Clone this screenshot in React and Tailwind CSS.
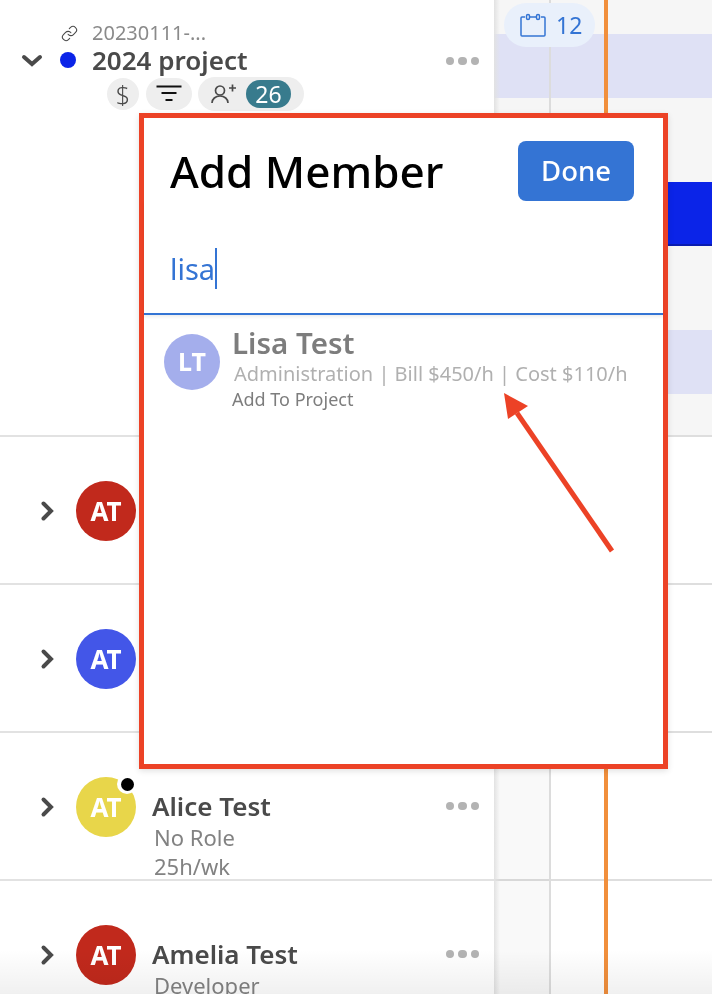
import React from "react";
import { Link } from "lucide-react";

const font = "font-['Noto_Sans','Open_Sans',sans-serif]";

const members = [
  { initials: "AT", color: "bg-[#c1291c]" },
  { initials: "AT", color: "bg-[#4356e8]" },
  { initials: "AT", color: "bg-[#e8d64a]", name: "Alice Test", role: "No Role", hours: "25h/wk", dot: true },
  { initials: "AT", color: "bg-[#c1291c]", name: "Amelia Test", role: "Developer" },
];

function Dots() {
  return (
    <div className="flex gap-[4px]">
      <span className="w-[8.5px] h-[8.5px] rounded-full bg-[#b3b3b3]"></span>
      <span className="w-[8.5px] h-[8.5px] rounded-full bg-[#b3b3b3]"></span>
      <span className="w-[8.5px] h-[8.5px] rounded-full bg-[#b3b3b3]"></span>
    </div>
  );
}

function MemberRow({ member }) {
  return (
    <div className="h-[148px] border-t-2 border-[#e2e2e2] flex items-start pt-[44px] pl-[36px] pr-[15px]">
      <svg width="22" height="22" viewBox="0 0 22 22" className="mt-[19px] shrink-0">
        <path d="M7.5 3.5L15 11L7.5 18.5" stroke="#4a4a4a" strokeWidth="4" fill="none" strokeLinecap="round" strokeLinejoin="miter" />
      </svg>
      <div className={`relative w-[60px] h-[60px] rounded-full ml-[18px] shrink-0 flex items-center justify-center text-white font-bold text-[26px] ${member.color}`}>
        {member.initials}
        {member.dot && (
          <span className="absolute top-[-3px] right-[-1px] w-[20px] h-[20px] rounded-full bg-white flex items-center justify-center">
            <span className="w-[13px] h-[13px] rounded-full bg-black"></span>
          </span>
        )}
      </div>
      <div className="ml-[16px] flex-1 min-w-0">
        {member.name && (
          <>
            <div className="flex items-center justify-between h-[30px] mt-[14px]">
              <span className="text-[26px] font-semibold text-[#4a4a4a] leading-none">{member.name}</span>
              <Dots />
            </div>
            <div className="text-[22px] text-[#828282] leading-[29px] ml-[2px] mt-[2px]">{member.role}</div>
            {member.hours && <div className="text-[22px] text-[#828282] leading-[29px] ml-[2px]">{member.hours}</div>}
          </>
        )}
      </div>
    </div>
  );
}

function GridRow() {
  return <div className="h-[148px] border-t-2 border-[#dedede]"></div>;
}

function Timeline() {
  return (
    <div className="relative flex-1 h-full">
      <div className="h-[435px] bg-[#f6f6f6] pt-[34px]">
        <div className="h-[64px] bg-[#dfe1f5]"></div>
        <div className="h-[64px] mt-[84px] bg-[#0b24e8] border-b-2 border-[#0a1cb0]"></div>
        <div className="h-[64px] mt-[84px] bg-[#dfe1f5]"></div>
      </div>
      <GridRow />
      <GridRow />
      <GridRow />
      <GridRow />
      {/* today and week markers */}
      <div className="absolute left-0 top-[435px] bottom-0 w-[55px] bg-[#00000006]"></div>
      <div className="absolute left-0 top-0 bottom-0 w-[6px] bg-gradient-to-r from-[#e2e2e2] to-transparent"></div>
      <div className="absolute left-[55px] top-0 bottom-0 w-[2px] bg-[#dcdcdc]"></div>
      <div className="absolute left-[110px] top-0 bottom-0 w-[4px] bg-[#f18f3c]"></div>
      <div className="absolute left-[10px] top-[3px] w-[91px] h-[44px] rounded-full bg-[#e9f0fb] flex items-center pl-[16px] gap-[10px] text-[#3474d4]">
        <svg width="26" height="24" viewBox="0 0 26 24" fill="none" stroke="#3474d4" strokeWidth="1.5">
          <path d="M5 4H2a1 1 0 0 0-1 1v17a1 1 0 0 0 1 1h22a1 1 0 0 0 1-1V5a1 1 0 0 0-1-1h-3M10 4h6" />
          <rect x="6.5" y="1.5" width="3" height="5" rx="1.5" />
          <rect x="16.5" y="1.5" width="3" height="5" rx="1.5" />
        </svg>
        <span className="text-[23px] leading-none">12</span>
      </div>
    </div>
  );
}

function ProjectHeader() {
  return (
    <div className="h-[435px]">
      <div className="flex items-center pl-[61px] pt-[22px] h-[44px] text-[#8a8a8a]">
        <Link size={17} strokeWidth={1.5} className="text-[#4a4a4a]" />
        <span className="ml-[14px] text-[20px] leading-none">20230111-...</span>
      </div>
      <div className="flex items-center pl-[20px] pr-[15px] h-[32px]">
        <svg width="24" height="24" viewBox="0 0 24 24" className="shrink-0">
          <path d="M4 9L12 16L20 9" stroke="#4a4a4a" strokeWidth="4" fill="none" strokeLinecap="round" />
        </svg>
        <span className="ml-[16px] w-[16px] h-[16px] rounded-full bg-[#0b24e8]"></span>
        <span className="ml-[16px] text-[26px] font-semibold text-[#4a4a4a] leading-none">2024 project</span>
        <div className="ml-auto mt-[2px]"><Dots /></div>
      </div>
      <div className="flex items-center pl-[107px] mt-[1px]">
        <div className="w-[32px] h-[32px] rounded-full bg-[#eeeeee] flex items-center justify-center text-[#4a4a4a] text-[25px] font-light leading-none">$</div>
        <div className="w-[46px] h-[32px] ml-[7px] rounded-full bg-[#eeeeee] flex items-center justify-center">
          <svg width="26" height="18" viewBox="0 0 26 18"><path d="M0.5 1.5h25M5.5 8h15M9.5 15h7" stroke="#111" strokeWidth="2" fill="none" /></svg>
        </div>
        <div className="w-[106px] h-[34px] ml-[6px] rounded-full bg-[#eeeeee] flex items-center pl-[13px] gap-[10px]">
          <svg width="25" height="22" viewBox="0 0 25 22" fill="none" stroke="#4a4a4a" strokeWidth="1.7">
            <circle cx="9" cy="7.5" r="4.5" />
            <path d="M1 20c0-4 3.5-7 8-7s8 3 8 7" />
            <path d="M18 5h7M21.5 1.5v7" />
          </svg>
          <span className="w-[45px] h-[28px] rounded-full bg-[#387b8d] text-white text-[23px] flex items-center justify-center leading-none">26</span>
        </div>
      </div>
    </div>
  );
}

function AddMemberPanel() {
  return (
    <div className="absolute left-[139px] top-[113px] w-[529px] h-[656px] bg-white border-[5px] border-[#ec4226] shadow-[0_2px_6px_rgba(0,0,0,0.12)] flex flex-col">
      <div className="flex items-center justify-between pl-[26px] pr-[29px] pt-[23px]">
        <span className="text-[44px] font-medium text-black leading-[60px]">Add Member</span>
        <button className="w-[116px] h-[60px] rounded-[8px] bg-[#3474d4] text-white text-[27.5px] font-medium">Done</button>
      </div>
      <div className="h-[114px] border-b-2 border-[#3474d4] shadow-[0_2px_3px_rgba(0,0,0,0.07)] pl-[26px] pt-[47px] flex items-start">
        <span className="text-[29px] text-[#3474d4] leading-[41px]">lisa</span>
        <span className="w-[2px] h-[41px] bg-[#3474d4]"></span>
      </div>
      <div className="flex pl-[20px] pt-[10px]">
        <div className="w-[56px] h-[56px] rounded-full bg-[#a4aeec] text-white font-bold text-[25px] flex items-center justify-center mt-[9px] shrink-0">LT</div>
        <div className="ml-[12px]">
          <div className="text-[29.5px] font-semibold text-[#7d7d7d] leading-[36px]">Lisa Test</div>
          <div className="text-[20px] text-[#b0b0b0] leading-[26px] ml-[2px]">Administration | Bill $450/h | Cost $110/h</div>
          <div className="text-[18px] text-[#7d7d7d] leading-[25px]">Add To Project</div>
        </div>
      </div>
    </div>
  );
}

export default function App() {
  return (
    <div className={`relative w-[712px] h-[994px] overflow-hidden bg-white flex will-change-transform ${font}`}>
      <div className="w-[494px] h-full shrink-0">
        <ProjectHeader />
        {members.map((member, i) => (
          <MemberRow key={i} member={member} />
        ))}
      </div>
      <Timeline />
      <AddMemberPanel />
      <svg className="absolute left-[490px] top-[380px]" width="140" height="180" viewBox="0 0 140 180">
        <path d="M122 171L27 33" stroke="#ec4226" strokeWidth="5" fill="none" />
        <path d="M14 13L38 26L18 39Z" fill="#ec4226" />
      </svg>
      <div className="absolute left-0 right-0 bottom-0 h-[44px] bg-gradient-to-b from-transparent to-[#0000000f]"></div>
    </div>
  );
}
